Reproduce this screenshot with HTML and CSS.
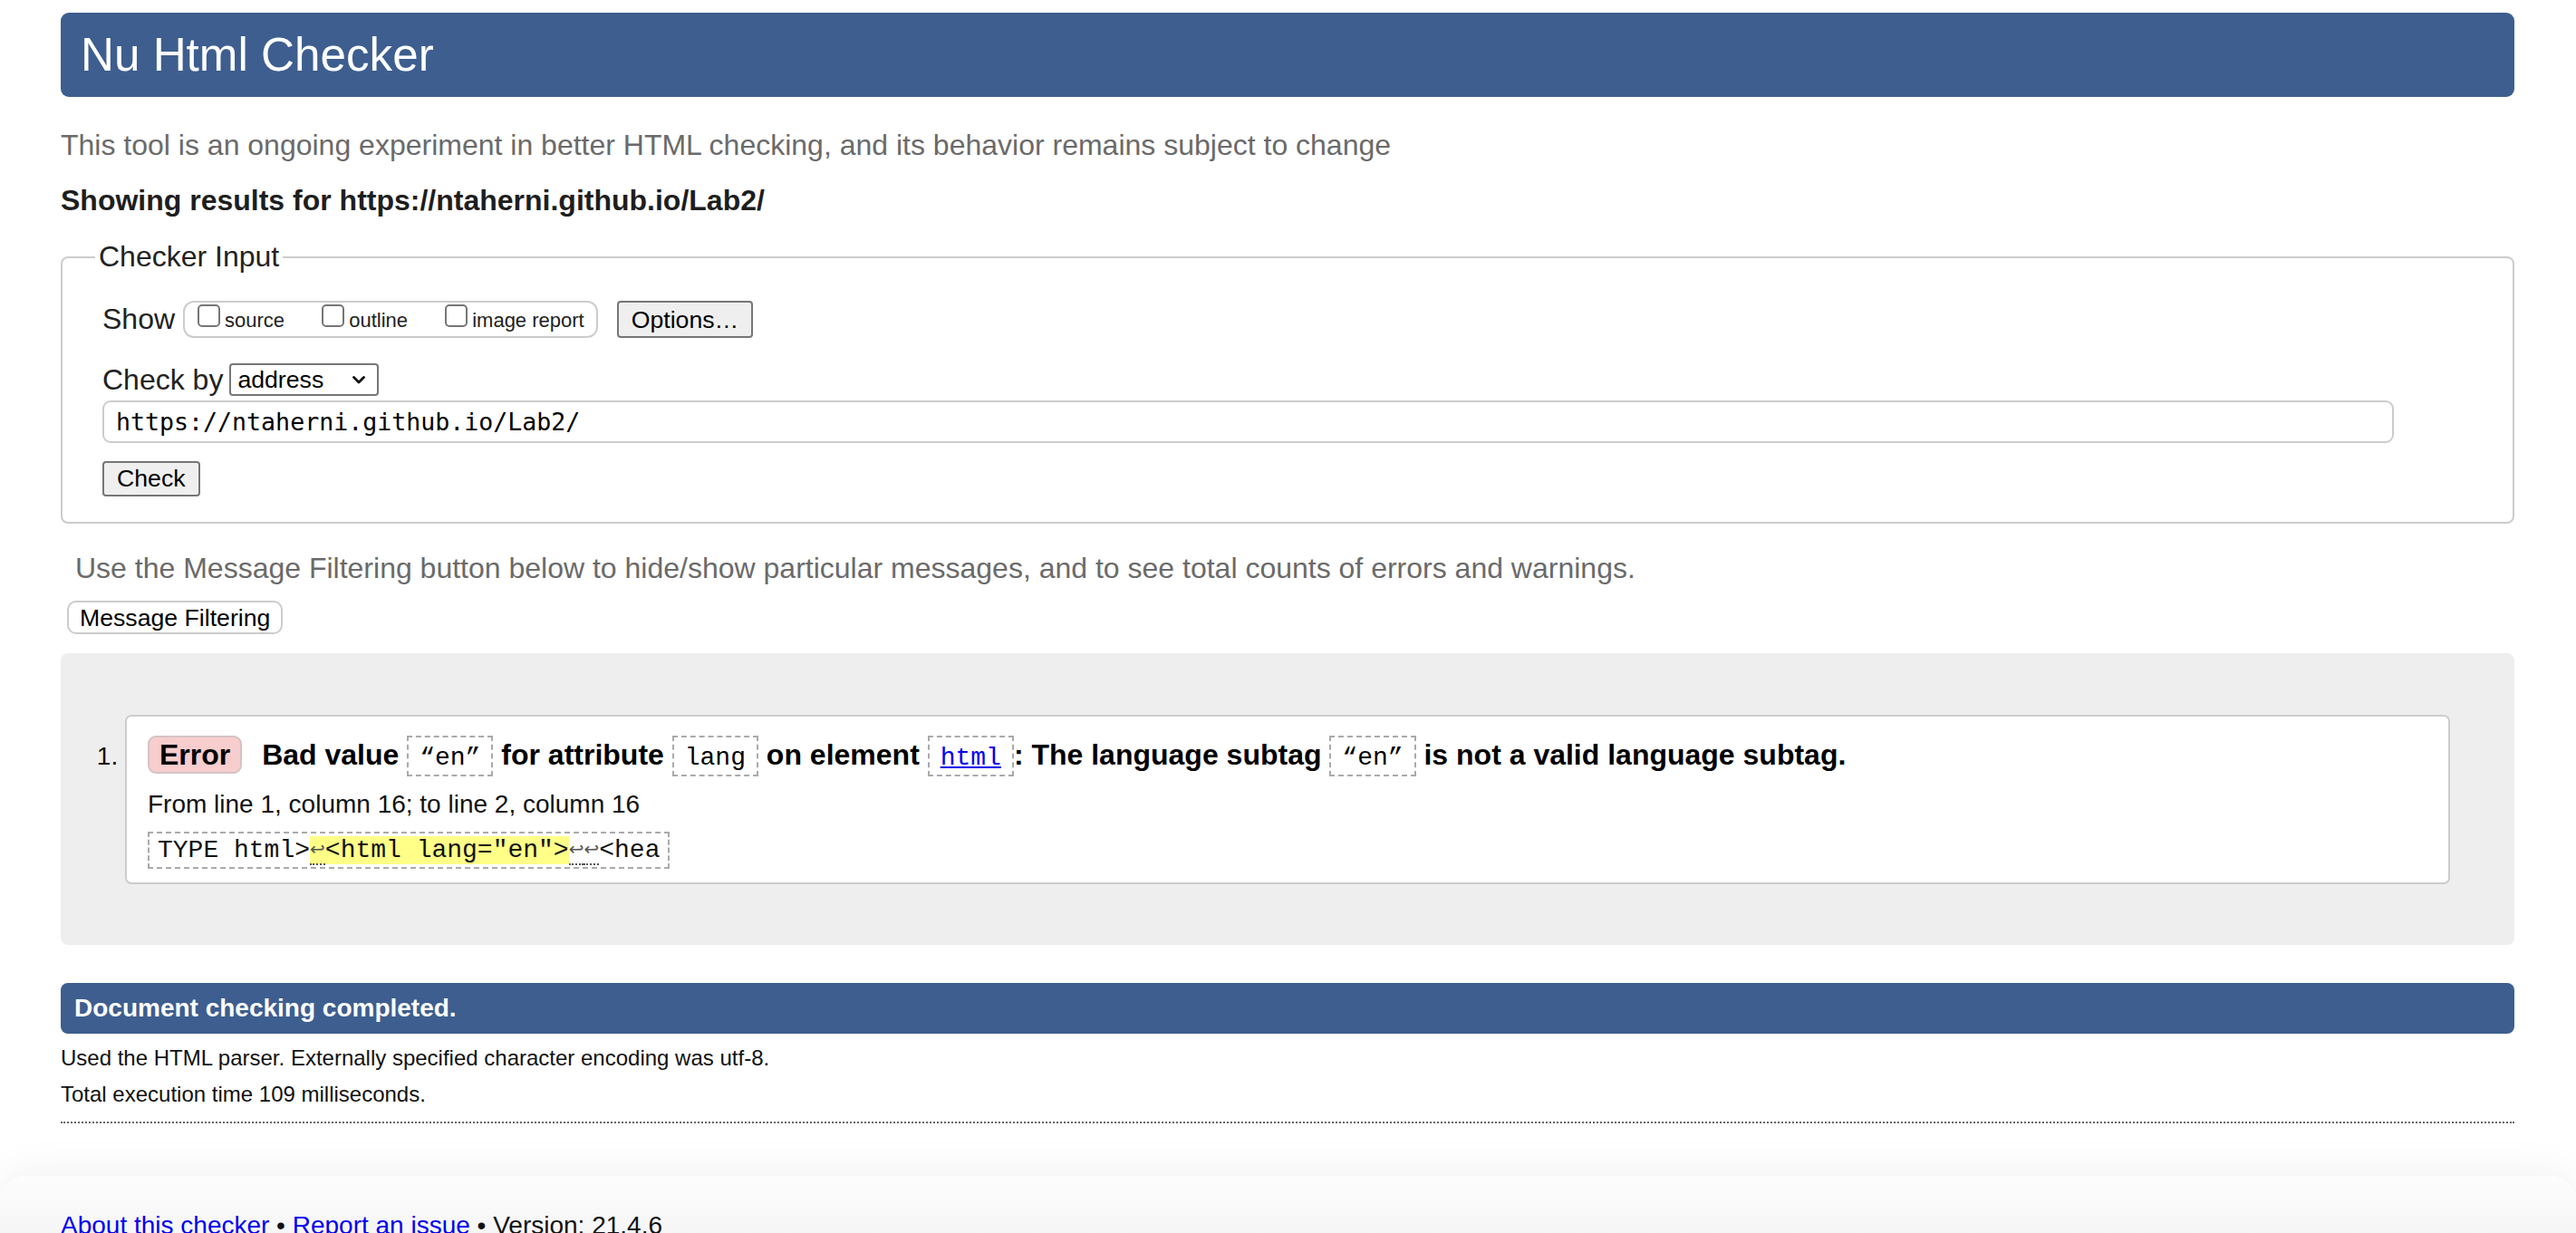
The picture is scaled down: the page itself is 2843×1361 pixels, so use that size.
FILE: index.html
```html
<!DOCTYPE html>
<html lang="en">
<head>
<meta charset="utf-8">
<title>Showing results for https://ntaherni.github.io/Lab2/ - Nu Html Checker</title>
<link rel="stylesheet" href="styles.css">
</head>
<body>
<h1 class="title">Nu Html Checker</h1>
<p class="tagline">This tool is an ongoing experiment in better HTML checking, and its behavior remains subject to change</p>
<p class="showing">Showing results for https://ntaherni.github.io/Lab2/</p>

<form class="checker">
  <fieldset class="input-box">
    <legend class="legend">Checker Input</legend>
    <div class="show-row">
      <span class="row-label">Show</span>
      <span class="opts">
        <label class="opt"><input type="checkbox" class="cb">source</label>
        <label class="opt"><input type="checkbox" class="cb">outline</label>
        <label class="opt"><input type="checkbox" class="cb">image report</label>
      </span>
      <button type="button" class="btn btn-options">Options…</button>
    </div>
    <div class="checkby-row">
      <span class="row-label">Check by</span>
      <span class="select-wrap">
        <select class="select"><option>address</option></select>
        <svg class="chev" width="14" height="9" viewBox="0 0 14 9"><path d="M1.5 1.5 L7 7 L12.5 1.5" fill="none" stroke="#111" stroke-width="2.8" stroke-linecap="round" stroke-linejoin="round"/></svg>
      </span>
    </div>
    <input class="url" type="text" value="https://ntaherni.github.io/Lab2/">
    <div class="check-row"><button type="button" class="btn btn-check">Check</button></div>
  </fieldset>
</form>

<p class="filter-note">Use the Message Filtering button below to hide/show particular messages, and to see total counts of errors and warnings.</p>
<button type="button" class="filter-btn">Message Filtering</button>

<div class="results">
  <ol class="msgs">
    <li class="msg">
      <p class="msg-head"><strong class="badge">Error</strong> <span>Bad value <code class="cd">“en”</code> for attribute <code class="cd">lang</code> on element <code class="cd"><a href="#">html</a></code>: The language subtag <code class="cd">“en”</code> is not a valid language subtag.</span></p>
      <p class="loc">From line 1, column 16; to line 2, column 16</p>
      <p class="extract"><code class="ex">TYPE html&gt;<b class="hl"><span class="lf">↩</span>&lt;html lang="en"&gt;</b><span class="lf">↩</span><span class="lf">↩</span>&lt;hea</code></p>
    </li>
  </ol>
</div>

<p class="done">Document checking completed.</p>
<p class="small first">Used the HTML parser. Externally specified character encoding was utf-8.</p>
<p class="small">Total execution time 109 milliseconds.</p>
<hr class="dots">

<footer class="foot">
  <a href="#">About this checker</a> • <a href="#">Report an issue</a> • Version: 21.4.6
</footer>
</body>
</html>
```

FILE: styles.css
```css
html, body {
  margin: 0;
}
body {
  padding: 0 68px 0 67px;
  font-family: "Liberation Sans", Arial, Helvetica, sans-serif;
  font-size: 32px;
  color: #222;
  background: #fff;
  overflow: hidden;
}

.title {
  margin: 14px 0 0;
  padding: 17px 22px;
  background: #3d5e8f;
  color: #fff;
  font-weight: normal;
  font-size: 51.2px;
  line-height: 59px;
  border-radius: 9px;
}

.tagline {
  margin: 35px 0 0;
  line-height: 37px;
  color: #6a6a6a;
}

.showing {
  margin: 24px 0 0;
  line-height: 37px;
  font-weight: bold;
  color: #1e1e1e;
}

.checker {
  margin: 25px 0 0;
}

.input-box {
  margin: 0;
  padding: 30px 44px 29px 44px;
  border: 2px solid #ccc;
  border-radius: 8px;
  min-width: 0;
}

.legend {
  margin-left: -8px;
  padding: 0 4px;
  font-size: 32px;
  line-height: 37px;
  color: #222;
}

.show-row {
  display: flex;
  align-items: center;
  height: 41px;
}

.row-label {
  line-height: 37px;
}

.opts {
  box-sizing: border-box;
  height: 41px;
  margin-left: 9px;
  padding: 2px 13px 0 14px;
  border: 2px solid #ccc;
  border-radius: 12px;
  font-size: 22px;
  line-height: 35px;
  white-space: nowrap;
}

.opt {
  margin-right: 35px;
  color: #222;
}
.opt:last-child {
  margin-right: 0;
}

.cb {
  appearance: none;
  -webkit-appearance: none;
  box-sizing: border-box;
  width: 25px;
  height: 25px;
  margin: 0 5px 0 0;
  border: 2px solid #767676;
  border-radius: 5px;
  background: #fff;
  vertical-align: baseline;
}

.btn {
  box-sizing: border-box;
  font-family: "Liberation Sans", Arial, Helvetica, sans-serif;
  font-size: 26.67px;
  line-height: 30px;
  color: #000;
  background: #efefef;
  border: 2px solid #767676;
  border-radius: 4px;
}

.btn-options {
  height: 41px;
  margin-left: 21px;
  padding: 0 14px;
}

.checkby-row {
  display: flex;
  align-items: center;
  margin-top: 28px;
  height: 36px;
}

.select-wrap {
  position: relative;
  display: inline-block;
  margin-left: 7px;
}

.select {
  appearance: none;
  -webkit-appearance: none;
  box-sizing: border-box;
  display: block;
  width: 165px;
  height: 36px;
  padding: 0 0 0 7px;
  font-family: "Liberation Sans", Arial, Helvetica, sans-serif;
  font-size: 26.67px;
  color: #000;
  background: #fff;
  border: 2px solid #767676;
  border-radius: 4px;
}

.chev {
  position: absolute;
  right: 15px;
  top: 14px;
  pointer-events: none;
}

.url {
  display: block;
  box-sizing: border-box;
  width: 2529px;
  height: 47px;
  margin-top: 5px;
  padding: 0 13px;
  font-family: "DejaVu Sans Mono", "Liberation Mono", monospace;
  font-size: 26.6px;
  color: #000;
  background: #fff;
  border: 2px solid #ccc;
  border-radius: 9px;
  outline: none;
}

.check-row {
  margin-top: 19px;
  height: 39px;
}

.btn-check {
  height: 39px;
  padding: 0 14px;
}

.filter-note {
  margin: 31px 0 0 16px;
  line-height: 37px;
  color: #6a6a6a;
}

.filter-btn {
  display: block;
  box-sizing: border-box;
  height: 37px;
  margin: 17px 0 0 7px;
  padding: 0 12px;
  font-family: "Liberation Sans", Arial, Helvetica, sans-serif;
  font-size: 26.67px;
  line-height: 30px;
  color: #000;
  background: #fff;
  border: 2px solid #ccc;
  border-radius: 10px;
}

.results {
  margin-top: 21px;
  padding: 68px 0 67px;
  background: #eee;
  border-radius: 8px;
}

.msgs {
  margin: 0;
  padding: 0 71px;
  font-size: 28px;
}

.msg {
  padding: 19px 23px 15px;
  background: #fff;
  border: 2px solid #ccc;
  border-radius: 7px;
  color: #111;
}

.msg-head {
  margin: 0;
  font-size: 32px;
  line-height: 46px;
  font-weight: bold;
  color: #000;
}

.badge {
  display: inline-block;
  margin-right: 13px;
  padding: 0 11px;
  line-height: 38px;
  background: #f7cdcd;
  border: 2px solid #d6c3c3;
  border-radius: 9px;
}

.cd {
  padding: 7px 12px 3px;
  font-family: "Liberation Mono", "Courier New", monospace;
  font-size: 28px;
  font-weight: normal;
  border: 2px dashed #aaa;
}

.cd a {
  color: #00e;
}

.loc {
  margin: 12px 0 0;
  font-size: 28px;
  line-height: 32px;
  color: #111;
}

.extract {
  margin: 14px 0 0;
  line-height: 41px;
}

.ex {
  display: inline-block;
  padding: 2px 9px;
  font-family: "Liberation Mono", "Courier New", monospace;
  font-size: 28px;
  line-height: 33px;
  color: #111;
  border: 2px dashed #aaa;
  vertical-align: top;
}

.hl {
  font-weight: normal;
  background: #ffff88;
}

.lf {
  display: inline-block;
  width: 16.8px;
  overflow: hidden;
  text-align: center;
  line-height: 31px;
  color: #555;
  font-family: "DejaVu Sans", sans-serif;
  font-size: 20px;
  border-bottom: 2px dotted #555;
  vertical-align: top;
}

.done {
  margin: 42px 0 0;
  padding: 12px 15px;
  font-size: 28px;
  line-height: 32px;
  font-weight: bold;
  color: #fff;
  background: #3d5e8f;
  border-radius: 8px;
}

.small {
  margin: 12px 0 0;
  font-size: 24px;
  line-height: 28px;
  color: #111;
}
.small.first {
  margin-top: 13px;
}

.dots {
  margin: 16px 0 0;
  height: 0;
  border: 0;
  border-top: 2px dotted #666;
}

.foot {
  margin: 58px -68px 0 -67px;
  padding: 39px 68px 60px 67px;
  font-size: 28px;
  line-height: 32px;
  color: #111;
  background: linear-gradient(to bottom, #fdfdfd, #eeeeee);
  box-shadow: 0 0 50px rgba(0, 0, 0, 0.07);
  border-radius: 30px 30px 0 0;
}

.foot a {
  color: #00e;
}
```
